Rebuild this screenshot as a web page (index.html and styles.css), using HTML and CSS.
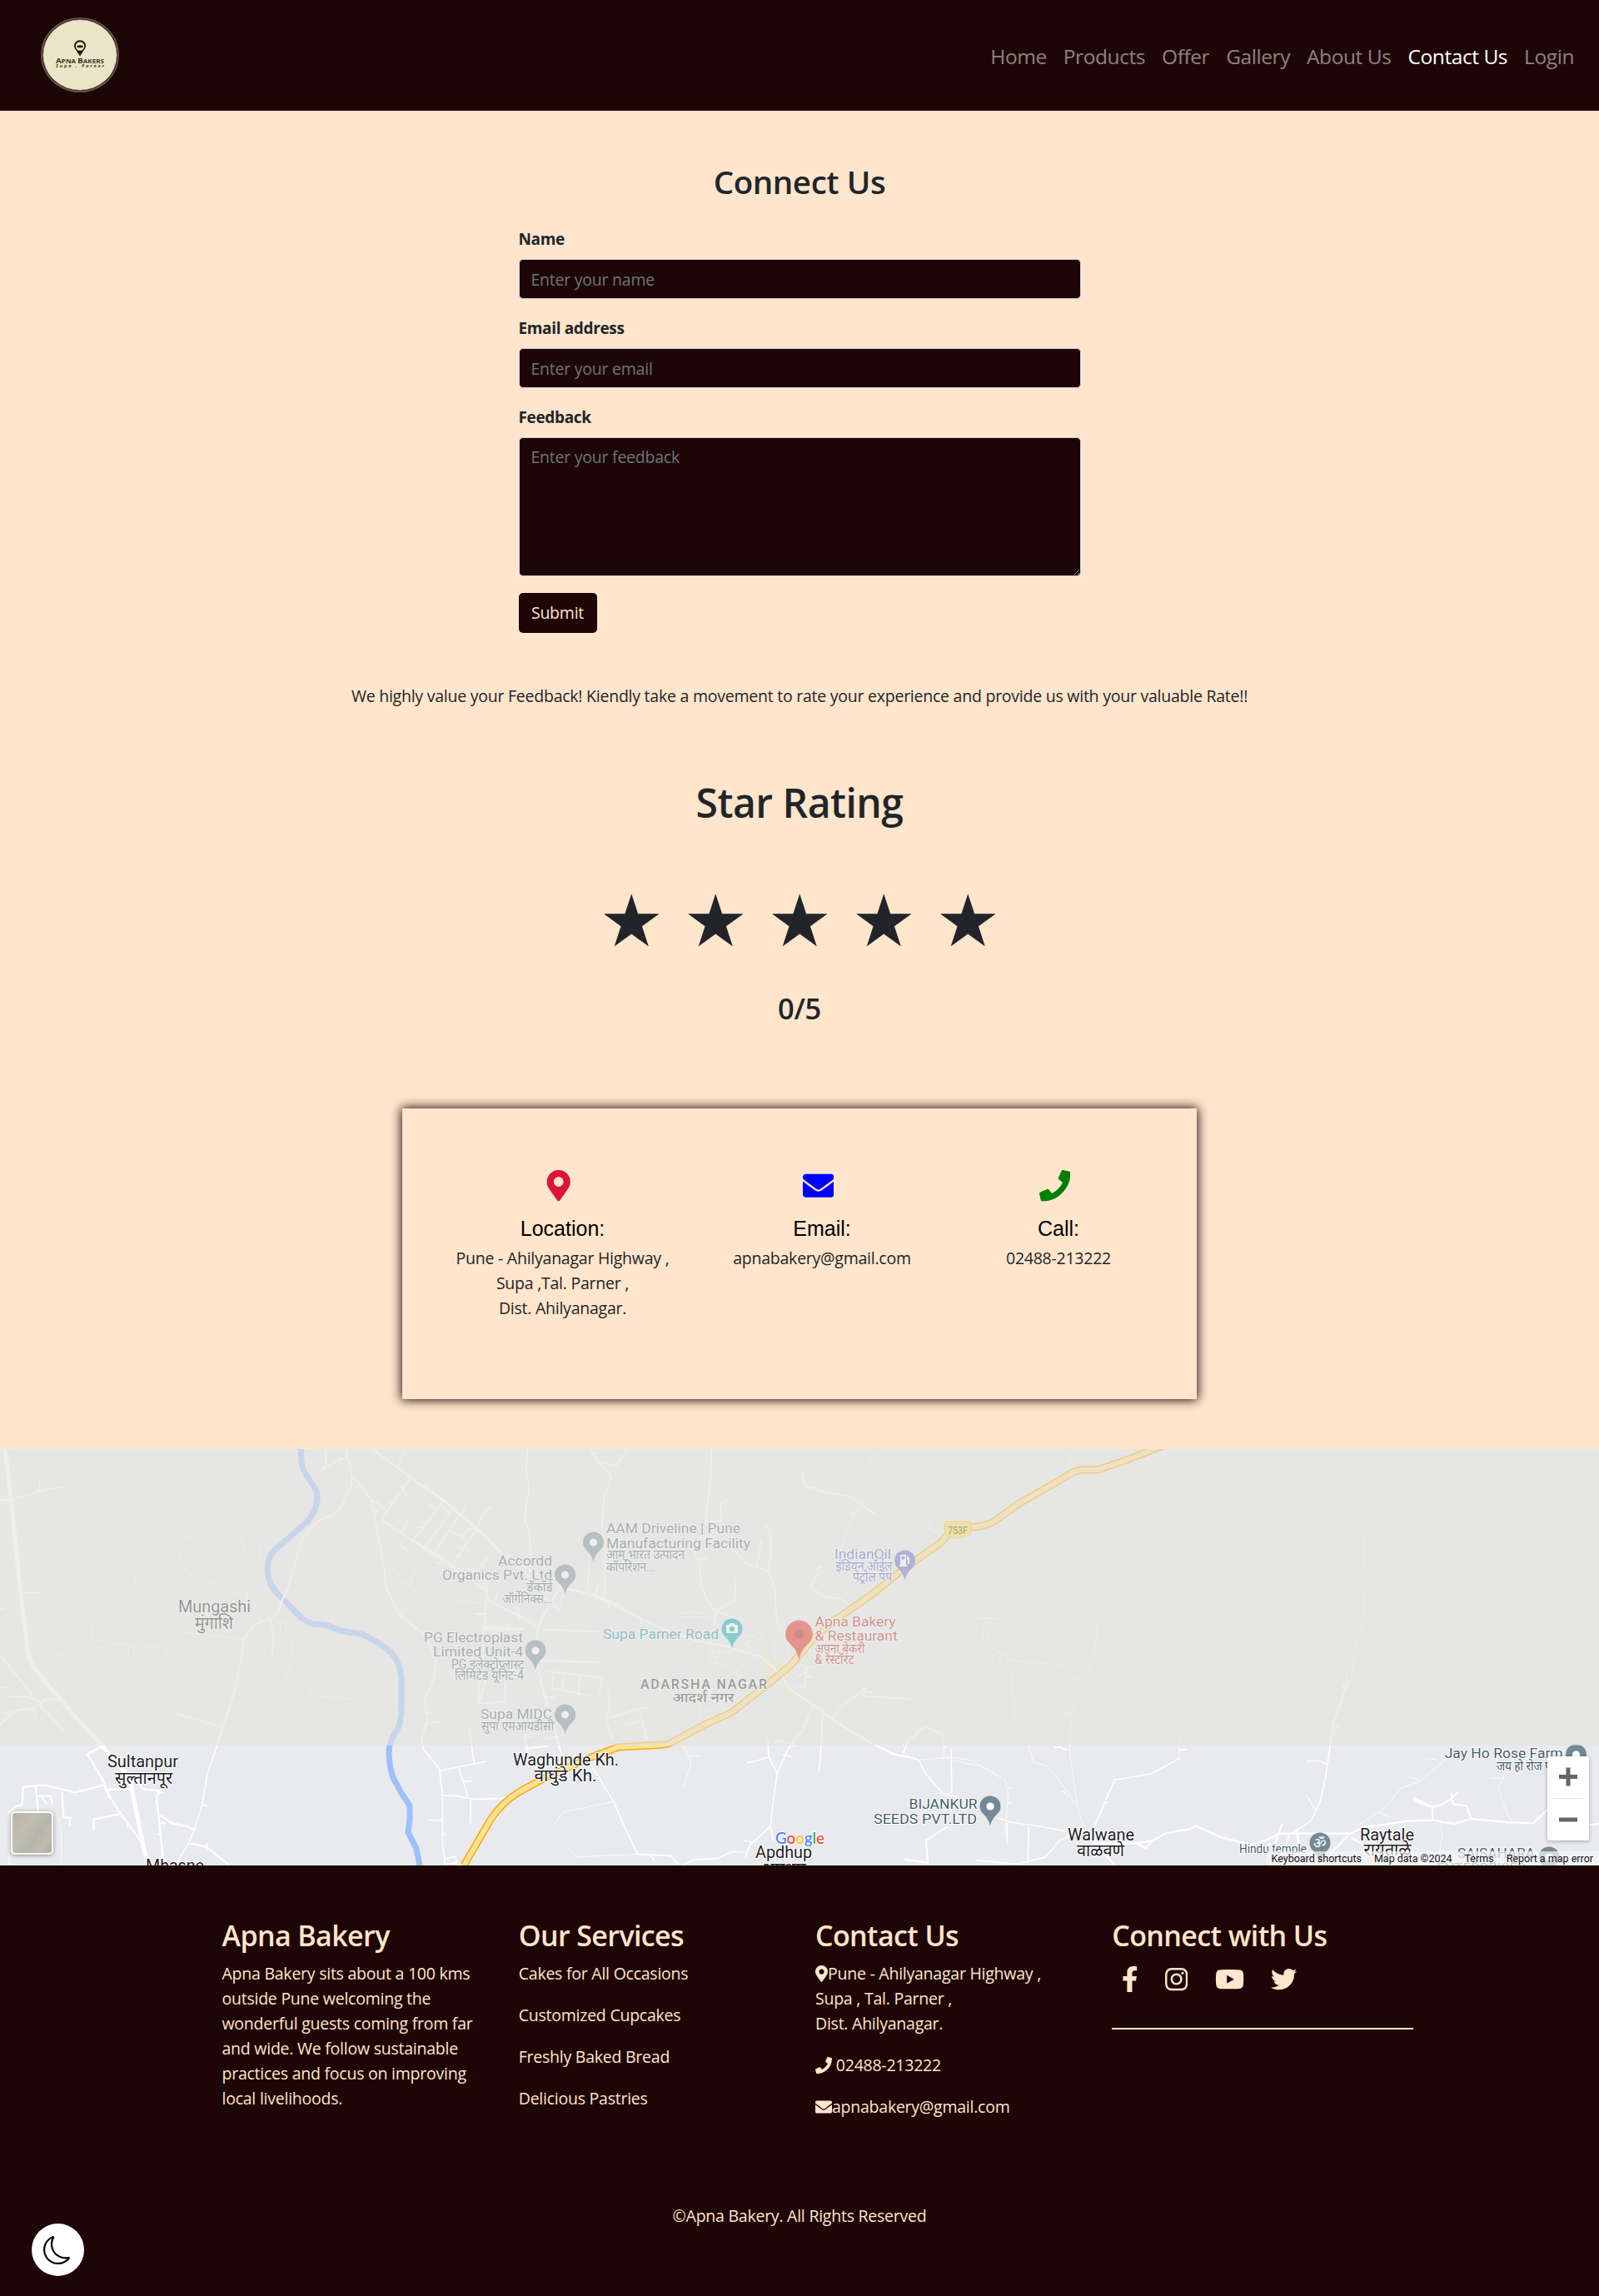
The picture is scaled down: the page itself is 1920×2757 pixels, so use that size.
FILE: index.html
```html
<!DOCTYPE html>
<html lang="en">
<head>
<meta charset="utf-8">
<title>Apna Bakery - Contact Us</title>
<link rel="stylesheet" href="styles.css">
</head>
<body>
<svg class="defs" width="0" height="0" aria-hidden="true">
  <symbol id="i-pin" viewBox="0 0 384 512"><path d="M172.268 501.67C26.97 291.031 0 269.413 0 192 0 85.961 85.961 0 192 0s192 85.961 192 192c0 77.413-26.97 99.031-172.268 309.67-9.535 13.774-29.93 13.773-39.464 0zM192 272c44.183 0 80-35.817 80-80s-35.817-80-80-80-80 35.817-80 80 35.817 80 80 80z"/></symbol>
  <symbol id="i-mail" viewBox="0 0 512 512"><path d="M502.3 190.8c3.9-3.1 9.7-.2 9.7 4.7V400c0 26.5-21.5 48-48 48H48c-26.5 0-48-21.5-48-48V195.6c0-5 5.7-7.8 9.7-4.7 22.4 17.4 52.1 39.5 154.1 113.6 21.1 15.4 56.7 47.8 92.2 47.6 35.7.3 72-32.8 92.3-47.6 102-74.1 131.6-96.3 154-113.7zM256 320c23.2.4 56.6-29.2 73.4-41.4 132.7-96.3 142.8-104.7 173.4-128.7 5.8-4.5 9.2-11.5 9.2-18.9v-19c0-26.5-21.5-48-48-48H48c-26.5 0-48 21.5-48 48v19c0 7.4 3.4 14.3 9.2 18.9 30.6 23.9 40.7 32.4 173.4 128.7 16.8 12.2 50.2 41.8 73.4 41.4z"/></symbol>
  <symbol id="i-phone" viewBox="0 0 512 512"><path d="M493.4 24.6l-104-24c-11.3-2.6-22.9 3.3-27.5 13.9l-48 112c-4.2 9.8-1.4 21.3 6.9 28l60.6 49.6c-36 76.7-98.9 140.5-177.2 177.2l-49.6-60.6c-6.8-8.3-18.2-11.1-28-6.9l-112 48C3.9 366.5-2 378.1.6 389.4l24 104C27.1 504.2 36.7 512 48 512c256.1 0 464-207.5 464-464 0-11.2-7.7-20.9-18.6-23.4z"/></symbol>
  <symbol id="i-star" viewBox="0 0 100 95.1"><path d="M50 0L61.8 36.3H100L69.1 58.8L80.9 95.1L50 72.7L19.1 95.1L30.9 58.8L0 36.3H38.2Z"/></symbol>
  <symbol id="m-pin" viewBox="-13 -13 26 37" overflow="visible"><path d="M0 23.5C-1.5 17 -4 13.500 -8.800 8.800A12.500 12.500 0 1 1 8.800 8.800C4 13.500 1.500 17 0 23.500Z"/></symbol>
</svg>

<nav class="navbar">
  <svg class="logo" viewBox="0 0 94 90">
    <ellipse cx="47" cy="45" rx="46" ry="44" fill="#1f0606" stroke="#6f5d52" stroke-width="1.6"/>
    <ellipse cx="47" cy="45" rx="44.200" ry="42.200" fill="#ebe5c8" stroke="#bdb49c" stroke-width=".6"/>
    <path d="M47 46.500L42.500 39.500A7 7 0 1 1 51.500 39.500Z" fill="#2a0e0c"/>
    <circle cx="47" cy="34.500" r="5.200" fill="#ebe5c8"/>
    <ellipse cx="47" cy="34.800" rx="3.800" ry="1.500" fill="#2a0e0c"/>
    <text class="logo-name" x="18" y="54.800" textLength="58" lengthAdjust="spacingAndGlyphs"><tspan font-size="9.600">A</tspan>PNA <tspan font-size="9.600">B</tspan>AKERS</text>
    <text class="logo-place" x="18" y="60.200" textLength="58">Supa , Parner</text>
  </svg>
  <ul class="links">
    <li>Home</li><li>Products</li><li>Offer</li><li>Gallery</li><li>About Us</li><li class="active">Contact Us</li><li>Login</li>
  </ul>
</nav>

<main>
  <h2 class="title">Connect Us</h2>
  <form class="form">
    <label for="name">Name</label>
    <input id="name" type="text" placeholder="Enter your name">
    <label for="email">Email address</label>
    <input id="email" type="email" placeholder="Enter your email">
    <label for="feedback">Feedback</label>
    <textarea id="feedback" placeholder="Enter your feedback"></textarea>
    <button type="button">Submit</button>
  </form>
  <p class="note">We highly value your Feedback! Kiendly take a movement to rate your experience and provide us with your valuable Rate!!</p>
  <h1 class="rating-title">Star Rating</h1>
  <div class="stars">
    <svg><use href="#i-star"/></svg><svg><use href="#i-star"/></svg><svg><use href="#i-star"/></svg><svg><use href="#i-star"/></svg><svg><use href="#i-star"/></svg>
  </div>
  <h3 class="score">0/5</h3>

  <section class="card">
    <div class="info place">
      <svg class="ico pin"><use href="#i-pin"/></svg>
      <h4>Location:</h4>
      <p>Pune - Ahilyanagar Highway ,<br>Supa ,Tal. Parner ,<br>Dist. Ahilyanagar.</p>
    </div>
    <div class="info email">
      <svg class="ico mail"><use href="#i-mail"/></svg>
      <h4>Email:</h4>
      <p>apnabakery@gmail.com</p>
    </div>
    <div class="info call">
      <svg class="ico phone"><use href="#i-phone"/></svg>
      <h4>Call:</h4>
      <p>02488-213222</p>
    </div>
  </section>
</main>

<section class="map">
  <svg class="canvas" viewBox="0 0 1920 500">
    <rect width="1920" height="500" fill="#e8eaed"/>
    <!-- built-up area near the junction -->
    <path fill="#f8edc4" d="M912 250l10-5 8 10 10 2 8 12-4 8-12-6-10 2-8-12zM938 280l10 4 8 12-4 6-8-8z"/>
    <!-- western roads -->
    <g class="road" transform="translate(0 -10) scale(.40816 .33333)">
      <path class="w5" d="M15 30L32 210L60 540L80 740Q85 790 100 815L135 870L190 950L300 1100L365 1190L385 1240L420 1450L435 1530"/>
      <path class="w4" d="M0 214H32"/>
      <path class="w2" d="M32 212L70 200L110 185L150 172L185 167M116 142V184M60 548H118M0 605H14M60 506H70M30 920L75 922L105 932L122 946L98 962L55 970L10 984M120 950L128 932H175M105 932L0 770M0 1024L30 985L75 968L95 965L107 1000M118 955L150 995L190 1045M0 890L28 888"/>
      <path class="w1" d="M135 870L163 768L185 774L225 800L320 728L445 742L525 687L600 698L718 716M320 728L255 710M378 738V780M395 742L392 765M445 742L487 748L494 776M273 710V660L248 668M273 660L295 650L318 618L360 580L392 540L401 500L388 455M458 310L495 306L530 308L545 345L535 380L522 440L555 478L625 510L728 570L795 640M530 308L533 295M545 345L575 352M555 348L562 328M735 288L745 330L762 380L770 430L740 428L715 390L710 335M770 430L768 490L785 540L825 580M800 645L838 650L843 690L858 720L855 790L842 850L912 868V918L1035 930M825 650L825 700M555 508L562 480M727 545V570"/>
      <path class="w2" d="M795 640L805 700L800 780M766 632V655M1017 30L1035 125L1033 170L1020 185L1010 225L985 265L935 290L905 325L885 370L870 430L855 500L835 570L815 625L795 640L745 665L718 716L708 800L690 900L670 985L650 1050L630 1130L610 1200L595 1310L575 1390L555 1450L520 1520M512 980L660 1035M548 1008L552 995M958 30L960 85L945 110L955 100L1000 65H1022M1003 65V90M1035 125L1060 160L1090 210L1105 290L1120 390L1130 460L1135 525L1175 630L1240 690M1043 170L1062 160M1090 212L1120 230L1135 252M1098 255L1112 256M1180 630L1188 608M1240 690L1265 740L1283 800L1275 860L1250 930L1257 1010L1240 1070L1245 1110L1292 1180L1302 1280L1302 1450L1310 1530M1257 980H1270M1257 1020L1295 1012M1275 875L1270 880M1283 802H1294M1258 1365L1300 1368M1300 1415L1310 1418M1310 1505L1340 1498L1345 1520L1310 1525"/>
      <path class="w3" d="M300 1100L257 1130L275 1165L308 1235L312 1260L350 1335L380 1385L415 1445M308 1240L220 1267L130 1240L68 1248L65 1312L48 1315L25 1340M105 1245L112 1335M112 1280H150L155 1310M125 1285L138 1310M182 1265L187 1358L205 1358V1388M190 1358H212M312 1256H380M320 1256L318 1280L328 1290M350 1345L275 1365V1405M372 1390L380 1380M395 1215L420 1255L475 1262L460 1280L480 1510M460 1262L480 1270M472 1350L510 1380L550 1388L570 1402M472 1378H486M463 1418H475M595 1312L610 1315M555 1450L605 1462L630 1485L675 1530M605 1462L610 1452"/>
      <path class="w1" d="M27 1340V1530M172 1358L180 1400L180 1530M25 1508H38"/>
      <path class="w2" d="M1292 1190L1350 1175L1432 1155M1350 1178L1378 1288M1362 1228L1388 1226M1303 1278L1340 1280L1400 1292L1480 1288L1500 1280M1385 1292V1380M1380 1030L1395 1165M1410 870L1408 945L1470 945M1568 1065L1525 1072"/>
      <path class="w2" d="M1095 30L1170 98L1210 135L1330 240L1400 320L1440 355L1480 410L1568 500M1170 98L1192 32M1205 138L1170 200L1122 285L1215 360L1280 405L1330 445L1430 520L1432 575L1568 650M1180 160L1197 200M1140 222H1155M1180 330L1202 285M1215 358L1300 225M1255 225L1285 245M1250 385L1330 250M1228 310L1250 320M1240 290L1255 297M1280 400L1345 280L1365 255V235M1305 245L1320 258M1320 325L1360 345L1375 320L1400 318M1360 345L1375 360M1335 440L1400 320L1425 255L1450 235M1345 380L1385 400M1340 410L1360 420M1430 575L1425 670L1540 678M1398 625L1425 622M1455 575L1470 548M1495 655V670M1525 650V600M1370 460L1400 470L1440 412M1420 450L1430 520M1280 435L1300 448M1250 155L1262 165M1175 375L1195 390"/>
      <path class="w1" d="M1215 360L1165 460L1175 500L1250 552L1280 480M1130 462H1165M1220 420L1280 470L1330 500L1310 560L1340 578L1425 585M1230 440L1200 530M1310 560L1265 530M1250 432L1180 540M1550 40L1548 130L1558 170L1545 280L1568 420"/>
    </g>
    <!-- central roads -->
    <g class="road" transform="translate(500 -10) scale(.44643 .33333)">
      <path class="w2" d="M300 30L295 100L303 170L290 280L305 330V440M468 30L488 75L525 130L505 200L498 330L508 400L505 570M488 75L538 92L568 30M795 30L790 150L778 290L763 360L748 410L762 440L765 520L780 570L805 615L800 670M778 290L820 290L818 230L838 210M760 430L785 420M805 615L855 575L860 500M805 615L885 650M937 300L950 320L955 390L947 470L965 540L968 640L980 690L1029 700M947 470L885 440L858 400L815 370M915 455L928 360M1038 115L1045 165L1100 185L1165 200L1195 230L1240 270M1045 165L1075 168M1195 230L1198 210M1168 265L1190 250M1170 595L1140 570L1100 562L1060 528L1085 470L1090 450L1070 470"/>
      <path class="w1" d="M1235 30L1215 90L1228 110L1210 190L1195 235L1165 300L1145 380L1120 440L1090 480M1110 560L1060 620L1032 650M1380 290L1375 315L1400 325M1385 320L1425 370M1220 560L1285 586M1500 640H1568M1545 640L1535 700L1545 740L1568 760"/>
      <path class="w3" d="M0 150L70 210L130 280L175 330L230 410L380 520L420 535L480 560L560 610L640 665L750 720L830 740L930 780L985 850L1000 890L1075 960L1130 1015L1225 1090L1285 1130L1325 1140M400 500L345 620L325 680L328 830L345 920L370 1030L390 1130"/>
      <path class="w2" d="M0 370L90 450L190 540V570L325 670M188 570L180 680H290M180 680V760L175 850M160 625H188M210 580L220 540M190 850L168 945L240 940L238 870M328 790L500 800M340 680L490 688M400 520L385 600M340 560L385 610M460 540L465 440M478 570L490 520M515 610L518 590M605 660V640M375 530L470 550L560 600M350 830L500 855L490 920M360 890L475 920M370 830L365 890M400 830L392 900M440 845L435 915M340 920L375 925"/>
      <path class="w1" d="M705 620H785M705 635H790M715 620V640M740 620V635M770 620V640M800 670L785 790L820 808L850 800M795 760H850M785 780H835M800 745L790 800M815 750L805 810M830 755L820 815M868 740L900 720L880 690M870 770L890 740L930 760M890 730L910 790M900 700L925 720L930 690M885 700L915 705M900 790L840 850L780 910L760 960V1030M890 830L830 890M880 810L800 880M850 830L880 860M790 900L830 970L828 1045M760 960L800 980M960 700L965 780M975 720H1010M1000 700V790"/>
      <path class="w2" d="M1032 800L1050 830L1025 850M1045 815H1070M1050 850H1065M1050 820L1045 890H1020M515 900L520 960L510 1010L530 1080M510 1003L600 965L622 962M530 1010L545 1015M560 1025L600 1010M600 970L620 1080M345 1050L290 1060L300 1120M290 1110L355 1100M345 1075L400 1060M1065 960L1040 1040L1000 1110L970 1200L960 1300L952 1390L895 1460L885 1500M1093 960L1090 1080L1083 1195M888 1160L925 1150L948 1138L945 1078M948 1138L970 1200M960 1090L975 1080L1022 1100M985 1130L1008 1138M1120 1000L1135 965L1175 925L1210 888L1200 920L1330 930M1210 905L1225 908M1308 1130L1325 1075L1340 1065L1350 1045L1372 1032L1415 1055M1310 1100L1312 1082M1325 1140L1350 1150L1370 1200L1415 1270L1425 1275L1440 1265L1438 1110M1415 1270L1455 1285M952 1390L960 1440M880 1440L900 1445L895 1470M715 1530L745 1510L810 1505L850 1480L885 1482M595 1490L685 1495L705 1530M630 1495L640 1510M595 1490L560 1390L530 1300L490 1210L465 1160M1430 1390L1370 1440L1375 1520L1315 1510M1505 1512L1568 1518"/>
      <path class="w1" d="M530 1300L395 1338L370 1380M410 1470L430 1500L495 1495L595 1490M710 1080L735 1140L738 1170L725 1220L720 1255M735 1135H762M1350 1150L1440 1140L1490 1150L1568 1210M1415 1055L1420 1110L1430 1080M465 1075L490 1090L500 1110"/>
    </g>
    <!-- eastern roads -->
    <g class="road" transform="translate(1020 -10) scale(.57398 .33333)">
      <path class="w1" d="M443 30L462 60L468 105M668 418L655 470L635 500L600 540L555 575L525 620L519 660L515 720L510 790L490 870L465 980L460 1110L475 1300L485 1370L500 1420M262 640L300 638M283 645L278 720L315 765L330 765V800M315 765V810M330 790L447 808L452 855L490 865M338 830L345 990L375 1100L385 1160L412 1168L440 1225L472 1310M345 945L360 895M448 980L465 978M450 990H462M468 1020L490 1055M705 972L688 1025L690 1145M1075 330L1073 520L1077 610L1070 690L1058 750L1050 850L1040 900M1030 825L1042 835L1040 880M1300 990L1280 1050L1240 1160L1190 1230L1155 1250L1115 1330L1060 1390M1110 1340L1132 1357M1262 1090L1290 1065L1310 1100L1330 1075M1200 1145L1230 1148M1170 1212L1190 1220M325 1215L332 1280L325 1420M212 1150L280 1175L320 1215M330 1250H340M330 1305H340M198 1140V1070L160 1030M1370 1200L1358 1250L1365 1300L1385 1375M1340 1215H1362M1235 1365L1240 1420L1230 1530"/>
      <path class="w2" d="M1040 880L1025 960L1013 1010L1003 1130L995 1220L985 1300L965 1370L920 1420L905 1500M1013 1030H1027M1010 1050L1018 1055M1030 875L1035 890M998 1165L980 1152L957 1155M957 1280L975 1328M690 1145L630 1200L555 1222L540 1280L510 1400M428 1105L440 1103L455 1115M690 1115L706 1112M530 1303H542M445 1262L452 1270M312 1360L340 1375L400 1390L450 1405M330 1375V1450M375 1390L373 1520M475 1410L440 1440L410 1500L350 1525L265 1512M205 1390L160 1440L165 1520L115 1508"/>
      <path class="w3" d="M500 1420L520 1450L570 1450L600 1450L635 1440L660 1415L710 1400L725 1388L780 1430L840 1455L870 1440L900 1415H1050L1070 1395L1170 1370L1220 1367L1265 1380L1300 1362L1380 1375L1430 1378L1460 1330L1540 1320M600 1450L620 1468L635 1440M905 1380L890 1450M935 1400L940 1450M880 1450L870 1470M1050 1410L1010 1480L990 1530M1050 1430L1100 1480M1180 1285L1220 1320L1240 1310L1258 1290L1275 1265M1258 1290L1265 1310L1290 1315L1300 1360M1180 1290L1200 1310L1220 1320L1220 1365M1260 1285V1268M500 1430L540 1500L555 1530M1540 1385L1568 1380"/>
    </g>
    <path class="river" d="M362 0Q360 18 367 30L380 50Q385 68 369 87L351 103L330 121Q318 135 322 153Q326 170 342 182L362 203L375 210L391 211L408 218L433 222Q455 230 470 245Q480 255 482 275V310Q482 327 477 337Q467 350 467 365Q468 390 476 402L482 413L492 428V445L490 460L500 480L504 500"/>
    <path class="bridge" d="M335 190L344 170"/>
    <g class="highway">
      <path class="edge" d="M557 500L589 445Q603 424 623 412L652 396L710 370L742 358L797 355Q802 355 807 352L844 332L879 316L920 284L949 260L974 231L1000 207L1045 176L1085 144L1130 112L1143 97L1166 94Q1186 92 1195 86L1221 67L1285 30Q1292 25 1301 25H1318L1353 13L1396 -4"/>
      <path class="fill" d="M557 500L589 445Q603 424 623 412L652 396L710 370L742 358L797 355Q802 355 807 352L844 332L879 316L920 284L949 260L974 231L1000 207L1045 176L1085 144L1130 112L1143 97L1166 94Q1186 92 1195 86L1221 67L1285 30Q1292 25 1301 25H1318L1353 13L1396 -4"/>
      <path d="M1136 87H1164Q1166 87 1165.500 92V101Q1165 105 1150 107Q1135 105 1134.500 101V92Q1134 87 1136 87Z" fill="#ffdf4f" stroke="#f2c43c"/>
      <text x="1138" y="101.500" textLength="24" lengthAdjust="spacingAndGlyphs" font-size="12" fill="#3a2a0a">753F</text>
    </g>
    <g class="biz">
      <use href="#m-pin" x="699.500" y="99" width="26" height="37"/><circle class="dot" cx="712.500" cy="112" r="4.600"/>
      <use href="#m-pin" x="665.600" y="138" width="26" height="37"/><circle class="dot" cx="678.600" cy="151" r="4.600"/>
      <use href="#m-pin" x="630" y="229" width="26" height="37"/><circle class="dot" cx="643" cy="242" r="4.600"/>
      <use href="#m-pin" x="665.600" y="306" width="26" height="37"/><circle class="dot" cx="678.600" cy="319" r="4.600"/>
      <use href="#m-pin" x="1176" y="416" width="26" height="37"/><circle class="dot" cx="1189" cy="429" r="4.600"/>
      <use href="#m-pin" x="1879.500" y="354" width="26" height="37"/><circle class="dot" cx="1892.500" cy="367" r="4.600"/>
      <use href="#m-pin" x="1572" y="460" width="26" height="37"/><text x="1577" y="479" font-size="17" class="om">ॐ</text>
      <use href="#m-pin" x="1847" y="477" width="26" height="37"/><circle class="dot" cx="1860" cy="490" r="4.600"/>
      <use href="#m-pin" x="866" y="203" width="26" height="37" fill="#00a7bc"/>
      <path d="M872 211h3l1.500-2h5l1.500 2h3v10h-14z" fill="#fff"/><circle cx="879" cy="216" r="3" fill="#00a7bc"/>
      <use href="#m-pin" x="1073.600" y="121" width="26" height="37" fill="#5f69c9"/>
      <path d="M1081 127h7v12h1v2h-9v-2h1zM1082.500 129v3.500h4V129zM1089 128l3 3v7h-2v-5h-1z" fill="#fff" fill-rule="evenodd"/>
      <path d="M959.500 252C957.500 243 954 238.500 948 233A16 16 0 1 1 971 233C965 238.500 961.500 243 959.500 252Z" fill="#e91c10" stroke="#c5221f" stroke-width=".7"/>
      <circle cx="959.500" cy="222" r="6" fill="#a50e0e"/>
    </g>
    <g class="lbl slate">
      <text x="728" y="101" textLength="161" lengthAdjust="spacingAndGlyphs">AAM Driveline | Pune</text>
      <text x="728" y="119" textLength="173" lengthAdjust="spacingAndGlyphs">Manufacturing Facility</text>
      <text class="hi" x="728" y="132" textLength="94" lengthAdjust="spacingAndGlyphs">आम भारत उत्पादन</text>
      <text class="hi" x="728" y="147" textLength="59" lengthAdjust="spacingAndGlyphs">कॉर्पोरेशन...</text>
      <text x="598" y="140" textLength="65" lengthAdjust="spacingAndGlyphs">Accordd</text>
      <text x="531" y="157" textLength="132" lengthAdjust="spacingAndGlyphs">Organics Pvt. Ltd</text>
      <text class="hi" x="632.600" y="171" textLength="31" lengthAdjust="spacingAndGlyphs">डॅकॉर्ड</text>
      <text class="hi" x="603.600" y="185" textLength="60" lengthAdjust="spacingAndGlyphs">ऑर्गेनिक्स...</text>
      <text x="509" y="232" textLength="119" lengthAdjust="spacingAndGlyphs">PG Electroplast</text>
      <text x="520" y="249" textLength="108" lengthAdjust="spacingAndGlyphs">Limited Unit-4</text>
      <text class="hi" x="542" y="264" textLength="87" lengthAdjust="spacingAndGlyphs">PG इलेक्ट्रोप्लास्ट</text>
      <text class="hi" x="546" y="277" textLength="83" lengthAdjust="spacingAndGlyphs">लिमिटेड यूनिट-4</text>
      <text x="577" y="324" textLength="86" lengthAdjust="spacingAndGlyphs">Supa MIDC</text>
      <text class="hi" x="578" y="338" textLength="87" lengthAdjust="spacingAndGlyphs">सुपा एमआयडीसी</text>
      <text x="1091.500" y="432" textLength="82" lengthAdjust="spacingAndGlyphs">BIJANKUR</text>
      <text x="1049" y="450" textLength="124" lengthAdjust="spacingAndGlyphs">SEEDS PVT.LTD</text>
      <text x="1734.700" y="371" textLength="142" lengthAdjust="spacingAndGlyphs">Jay Ho Rose Farm</text>
      <text class="hi" x="1797" y="386" textLength="80" lengthAdjust="spacingAndGlyphs">जय हो रोज फार्म</text>
      <text x="1488" y="485" textLength="81" lengthAdjust="spacingAndGlyphs" font-size="14">Hindu temple</text>
      <text x="1750" y="491" textLength="93" lengthAdjust="spacingAndGlyphs">SAISAHARA</text>
      <text x="1725" y="509" textLength="107" lengthAdjust="spacingAndGlyphs">ENTERPRISES</text>
    </g>
    <g class="lbl teal"><text x="724" y="228" textLength="139" lengthAdjust="spacingAndGlyphs">Supa Parner Road</text></g>
    <g class="lbl violet">
      <text x="1002" y="132" textLength="68" lengthAdjust="spacingAndGlyphs">IndianOil</text>
      <text class="hi" x="1003.600" y="146" textLength="68" lengthAdjust="spacingAndGlyphs">इंडियन ऑईल</text>
      <text class="hi" x="1024" y="159" textLength="47" lengthAdjust="spacingAndGlyphs">पेट्रोल पंप</text>
    </g>
    <g class="lbl red">
      <text x="978.600" y="213" textLength="97" lengthAdjust="spacingAndGlyphs">Apna Bakery</text>
      <text x="978.600" y="230" textLength="99" lengthAdjust="spacingAndGlyphs">&amp; Restaurant</text>
      <text class="hi" x="978.600" y="245" textLength="60" lengthAdjust="spacingAndGlyphs">अपना बेकरी</text>
      <text class="hi" x="978.600" y="258" textLength="47" lengthAdjust="spacingAndGlyphs">&amp; रेस्टॉरंट</text>
    </g>
    <g class="lbl area">
      <text x="769" y="288" textLength="152">ADARSHA NAGAR</text>
      <text x="807.600" y="304" textLength="74" lengthAdjust="spacingAndGlyphs">आदर्श नगर</text>
    </g>
    <g class="lbl town">
      <text x="214" y="196" textLength="87" lengthAdjust="spacingAndGlyphs" class="soft">Mungashi</text>
      <text x="234" y="216" textLength="46" lengthAdjust="spacingAndGlyphs" class="soft">मुंगाशि</text>
      <text x="129" y="382" textLength="85" lengthAdjust="spacingAndGlyphs">Sultanpur</text>
      <text x="138" y="402" textLength="69" lengthAdjust="spacingAndGlyphs">सुल्तानपूर</text>
      <text x="175" y="507" textLength="70" lengthAdjust="spacingAndGlyphs">Mhasne</text>
      <text x="616" y="379.500" textLength="127" lengthAdjust="spacingAndGlyphs">Waghunde Kh.</text>
      <text x="641.500" y="399" textLength="75" lengthAdjust="spacingAndGlyphs">वाघुंडे Kh.</text>
      <text x="907" y="491" textLength="68" lengthAdjust="spacingAndGlyphs">Apdhup</text>
      <text x="914" y="511" textLength="54" lengthAdjust="spacingAndGlyphs">अपधुप</text>
      <text x="1282" y="470" textLength="80" lengthAdjust="spacingAndGlyphs">Walwane</text>
      <text x="1293" y="489" textLength="57" lengthAdjust="spacingAndGlyphs">वाळवणे</text>
      <text x="1633" y="470" textLength="65" lengthAdjust="spacingAndGlyphs">Raytale</text>
      <text x="1637.600" y="488" textLength="57" lengthAdjust="spacingAndGlyphs">रायताळे</text>
    </g>
    <text class="google" x="931" y="474" textLength="59" lengthAdjust="spacingAndGlyphs"><tspan fill="#4285f4">G</tspan><tspan fill="#ea4335">o</tspan><tspan fill="#fbbc04">o</tspan><tspan fill="#4285f4">g</tspan><tspan fill="#34a853">l</tspan><tspan fill="#ea4335">e</tspan></text>
    <rect width="1920" height="356" fill="#e5e3df" fill-opacity=".6"/>
  </svg>
  <div class="satellite"></div>
  <svg class="zoom" viewBox="0 0 50 101">
    <path d="M14 24.500H36M25 13.500V35.500M14 76H36" stroke="#666" stroke-width="5"/>
    <path d="M6 50.500H43" stroke="#e6e6e6" stroke-width="1.200"/>
  </svg>
  <div class="credits"><span>Keyboard shortcuts</span><span>Map data ©2024</span><span>Terms</span><span>Report a map error</span></div>
</section>

<footer>
  <div class="cols">
    <div class="col">
      <h3>Apna Bakery</h3>
      <p>Apna Bakery sits about a 100 kms<br>outside Pune welcoming the<br>wonderful guests coming from far<br>and wide. We follow sustainable<br>practices and focus on improving<br>local livelihoods.</p>
    </div>
    <div class="col">
      <h3>Our Services</h3>
      <p>Cakes for All Occasions</p>
      <p>Customized Cupcakes</p>
      <p>Freshly Baked Bread</p>
      <p>Delicious Pastries</p>
    </div>
    <div class="col">
      <h3>Contact Us</h3>
      <p><svg class="fi narrow"><use href="#i-pin"/></svg>Pune - Ahilyanagar Highway ,<br>Supa , Tal. Parner ,<br>Dist. Ahilyanagar.</p>
      <p><svg class="fi"><use href="#i-phone"/></svg> 02488-213222</p>
      <p><svg class="fi"><use href="#i-mail"/></svg>apnabakery@gmail.com</p>
    </div>
    <div class="col">
      <h3>Connect with Us</h3>
      <div class="social">
        <svg width="19.500" viewBox="0 0 320 512"><path d="M279.14 288l14.22-92.66h-88.91v-60.13c0-25.35 12.42-50.06 52.24-50.06h40.42V6.260S260.430 0 225.360 0c-73.220 0-121.080 44.380-121.080 124.720v70.620H22.890V288h81.390v224h100.170V288z"/></svg>
        <svg width="27.300" viewBox="0 0 448 512"><path d="M224.1 141c-63.6 0-114.9 51.3-114.9 114.9s51.3 114.9 114.9 114.9S339 319.5 339 255.9 287.7 141 224.1 141zm0 189.6c-41.1 0-74.7-33.5-74.7-74.7s33.5-74.7 74.7-74.7 74.7 33.5 74.7 74.7-33.6 74.7-74.7 74.7zm146.4-194.3c0 14.9-12 26.8-26.8 26.8-14.9 0-26.8-12-26.8-26.8s12-26.8 26.8-26.8 26.8 12 26.8 26.8zm76.1 27.2c-1.7-35.9-9.9-67.7-36.2-93.9-26.2-26.2-58-34.4-93.9-36.2-37-2.1-147.9-2.1-184.9 0-35.8 1.7-67.6 9.9-93.9 36.1s-34.4 58-36.2 93.9c-2.1 37-2.1 147.9 0 184.9 1.7 35.9 9.9 67.7 36.2 93.9s58 34.4 93.9 36.2c37 2.1 147.9 2.1 184.9 0 35.9-1.7 67.7-9.9 93.9-36.2 26.2-26.2 34.4-58 36.2-93.9 2.1-37 2.1-147.8 0-184.8zM398.8 388c-7.8 19.6-22.9 34.7-42.6 42.6-29.5 11.7-99.5 9-132.1 9s-102.7 2.6-132.1-9c-19.6-7.8-34.7-22.9-42.6-42.6-11.7-29.5-9-99.5-9-132.1s-2.6-102.7 9-132.1c7.8-19.6 22.9-34.7 42.6-42.6 29.5-11.7 99.5-9 132.1-9s102.7-2.6 132.1 9c19.6 7.8 34.7 22.9 42.6 42.6 11.7 29.5 9 99.5 9 132.1s2.7 102.7-9 132.1z"/></svg>
        <svg width="35.200" viewBox="0 0 576 512"><path d="M549.655 124.083c-6.281-23.65-24.787-42.276-48.284-48.597C458.781 64 288 64 288 64S117.22 64 74.629 75.486c-23.497 6.322-42.003 24.947-48.284 48.597-11.412 42.867-11.412 132.305-11.412 132.305s0 89.438 11.412 132.305c6.281 23.65 24.787 41.5 48.284 47.821C117.22 448 288 448 288 448s170.78 0 213.371-11.486c23.497-6.321 42.003-24.171 48.284-47.821 11.412-42.867 11.412-132.305 11.412-132.305s0-89.438-11.412-132.305zm-317.51 213.508V175.185l142.739 81.205-142.739 81.201z"/></svg>
        <svg width="31.250" viewBox="0 0 512 512"><path d="M459.37 151.716c.325 4.548.325 9.097.325 13.645 0 138.72-105.583 298.558-298.558 298.558-59.452 0-114.68-17.219-161.137-47.106 8.447.974 16.568 1.299 25.34 1.299 49.055 0 94.213-16.568 130.274-44.832-46.132-.975-84.792-31.188-98.112-72.772 6.498.974 12.995 1.624 19.818 1.624 9.421 0 18.843-1.3 27.614-3.573-48.081-9.747-84.143-51.98-84.143-102.985v-1.299c13.969 7.797 30.214 12.67 47.431 13.319-28.264-18.843-46.781-51.005-46.781-87.391 0-19.492 5.197-37.36 14.294-52.954 51.655 63.675 129.3 105.258 216.365 109.807-1.624-7.797-2.599-15.918-2.599-24.04 0-57.828 46.782-104.934 104.934-104.934 30.213 0 57.502 12.67 76.67 33.137 23.715-4.548 46.456-13.32 66.599-25.34-7.798 24.366-24.366 44.833-46.132 57.827 21.117-2.273 41.584-8.122 60.426-16.243-14.292 20.791-32.161 39.308-52.628 54.253z"/></svg>
      </div>
      <div class="rule"></div>
    </div>
  </div>
  <p class="copy">©Apna Bakery. All Rights Reserved</p>
</footer>
<div class="theme">
  <svg width="34" height="34" viewBox="0 0 16 16"><path d="M6 .278a.768.768 0 0 1 .08.858 7.208 7.208 0 0 0-.878 3.46c0 4.021 3.278 7.277 7.318 7.277.527 0 1.04-.055 1.533-.16a.787.787 0 0 1 .81.316.733.733 0 0 1-.031.893A8.349 8.349 0 0 1 8.344 16C3.734 16 0 12.286 0 7.71 0 4.266 2.114 1.312 5.124.06A.752.752 0 0 1 6 .278zM4.858 1.311A7.269 7.269 0 0 0 1.025 7.71c0 4.02 3.279 7.276 7.319 7.276a7.316 7.316 0 0 0 5.205-2.162c-.337.042-.68.063-1.029.063-4.61 0-8.343-3.714-8.343-8.29 0-1.167.242-2.278.681-3.286z"/></svg>
</div>
</body>
</html>
```

FILE: styles.css
```css
* { box-sizing: border-box; }
body {
  margin: 0;
  background: #ffe5cc;
  color: #212529;
  font: 19.500px/30px "Open Sans", "Noto Sans", sans-serif;
  letter-spacing: -.24px;
  position: relative;
}
h1, h2, h3, h4, p, ul { margin: 0; padding: 0; }
h1, h2, h3 { font-weight: 600; }
.defs { position: absolute; }

.navbar {
  height: 133px;
  background: #1f0606;
  display: flex;
  align-items: center;
  justify-content: space-between;
  padding: 0 20px 0 48.500px;
}
.logo { width: 94px; height: 90px; margin-top: -1px; letter-spacing: 0; }
.logo-name { font: 700 7.800px "Open Sans", sans-serif; fill: #4a2c26; }
.logo-place { font: italic 700 5.200px "Open Sans", sans-serif; fill: #4a2c26; }
.links { display: flex; list-style: none; font-size: 24.500px; letter-spacing: -.43px; color: #8f8282; margin-top: 2px; }
.links li { padding: 0 10px; }
.links .active { color: #fff; }

main { padding-top: 61px; height: 1607px; }
.title { font-size: 38.500px; line-height: 48px; letter-spacing: -.4px; text-align: center; }
.form { width: 675px; margin: 30px auto 0; display: flex; flex-direction: column; align-items: stretch; }
.form label { font-weight: 700; font-size: 19px; line-height: 30px; letter-spacing: -.35px; margin-bottom: 9px; }
.form input, .form textarea {
  font: inherit;
  letter-spacing: inherit;
  background: #1f0606;
  border: 1px solid #ced4da;
  border-radius: 5px;
  padding: 1px 14px 0;
  margin: 0 0 20.500px;
  height: 47.500px;
  outline: none;
}
.form textarea { height: 167px; padding-top: 8px; margin-bottom: 20px; display: block; }
.form ::placeholder { color: #6c757d; opacity: 1; }
.form button {
  font: inherit;
  letter-spacing: inherit;
  align-self: flex-start;
  width: 94px;
  height: 47.500px;
  padding: 1px 0 0;
  border: 0;
  border-radius: 5px;
  background: #1f0606;
  color: #ffe5cc;
}
.note { text-align: center; margin-top: 61px; }
.rating-title { font-size: 48px; line-height: 60px; letter-spacing: -.5px; text-align: center; margin-top: 83px; }
.stars { display: flex; justify-content: center; gap: 34.500px; margin-top: 79px; }
.stars svg { width: 66.500px; height: 63.500px; fill: #212529; }
.score { font-size: 34.500px; line-height: 42px; text-align: center; margin-top: 54px; }

.card {
  width: 954px;
  height: 349px;
  margin: 99px auto 0;
  padding-top: 74px;
  box-shadow: 0 0 12px 1px #1f0606;
  background: #ffe5cc;
  display: grid;
  grid-template-columns: 385px 238px 331px;
}
.info { text-align: center; display: flex; flex-direction: column; align-items: center; }
.info h4 { font: 25px/30px "Liberation Sans", Arial, sans-serif; letter-spacing: 0; color: #000; margin: 17px 0 6px; }
.ico { width: 37.500px; height: 37.500px; margin-right: 9px; }
.pin { fill: crimson; }
.mail { fill: blue; }
.phone { fill: green; }
.call { padding-right: 1px; }

.map { position: relative; height: 500px; overflow: hidden; letter-spacing: 0; }
.canvas { display: block; width: 1920px; height: 500px; font-family: Roboto, "Noto Sans", sans-serif; }
.road path { fill: none; stroke: #fff; stroke-linejoin: round; vector-effect: non-scaling-stroke; }
.road .w1 { stroke-width: 1; opacity: .85; }
.road .w2 { stroke-width: 1.600; }
.road .w3 { stroke-width: 2.300; }
.road .w4 { stroke-width: 4; }
.road .w5 { stroke-width: 5; }
.river { fill: none; stroke: #9cc0f9; stroke-width: 7; stroke-linejoin: round; }
.bridge { fill: none; stroke: #fff; stroke-width: 2; }
.highway .edge { fill: none; stroke: #f9ab00; stroke-width: 9; stroke-linejoin: round; }
.highway .fill { fill: none; stroke: #fde293; stroke-width: 6; stroke-linejoin: round; }
.biz { fill: #728a96; }
.biz .dot, .biz .om { fill: #fff; }
.lbl { font-size: 17.200px; paint-order: stroke; stroke: #fff; stroke-width: 2px; stroke-linejoin: round; }
.lbl .hi { font-size: 16px; }
.slate { fill: #455e6a; }
.teal { fill: #008c98; }
.violet { fill: #4a58b8; }
.red { fill: #b51410; }
.area { fill: #2c3034; font-weight: 500; font-size: 16px; }
.town { fill: #202124; font-size: 20px; }
.town .soft { fill: #202124; }
.google { font: 500 20px Lato, sans-serif; paint-order: stroke; stroke: #fff; stroke-width: 1.500px; }
.satellite {
  position: absolute;
  left: 13px;
  top: 435px;
  width: 51px;
  height: 52px;
  border: 2.500px solid #fff;
  border-radius: 5px;
  background: linear-gradient(125deg, #b5b4a8, #c3beb2 35%, #b4b5aa 60%, #c4baad 80%, #b0afa3);
  box-shadow: 0 1px 5px rgba(0, 0, 0, .4);
}
.zoom {
  position: absolute;
  left: 1858px;
  top: 369px;
  width: 50px;
  height: 101px;
  background: #fff;
  border-radius: 3px;
  box-shadow: 0 1px 5px rgba(0, 0, 0, .3);
}
.credits {
  position: absolute;
  right: 0;
  bottom: 0;
  height: 17px;
  padding: 0 7px 0 5px;
  display: flex;
  gap: 15px;
  font: 12.500px/17px Roboto, sans-serif;
  color: #111;
  background: rgba(245, 245, 245, .7);
}

footer { height: 517px; background: #1f0606; color: #ffe5cc; padding-top: 63px; }
.cols { width: 1425px; margin: 0 auto; display: grid; grid-template-columns: repeat(4, minmax(0, 1fr)); height: 320px; }
.col { padding: 0 0 0 19px; white-space: nowrap; }
.col h3 { font-size: 34px; line-height: 42px; letter-spacing: -.6px; margin-bottom: 10px; }
.col p { margin-bottom: 20px; }
.fi { width: 20px; height: 20px; fill: #ffe5cc; vertical-align: -2.500px; }
.narrow { width: 15px; }
.social { display: flex; gap: 32.500px; padding-left: 11.500px; height: 31px; margin-top: 16px; fill: #ffe5cc; }
.social svg { height: 31.250px; }
.rule { width: 362px; height: 2px; background: #ffe5cc; margin-top: 43px; }
.copy { text-align: center; margin-top: 23px; }
.theme {
  position: absolute;
  left: 37.500px;
  top: 2670px;
  width: 63px;
  height: 63px;
  border-radius: 50%;
  background: #fff;
  display: flex;
  align-items: center;
  justify-content: center;
}
```
